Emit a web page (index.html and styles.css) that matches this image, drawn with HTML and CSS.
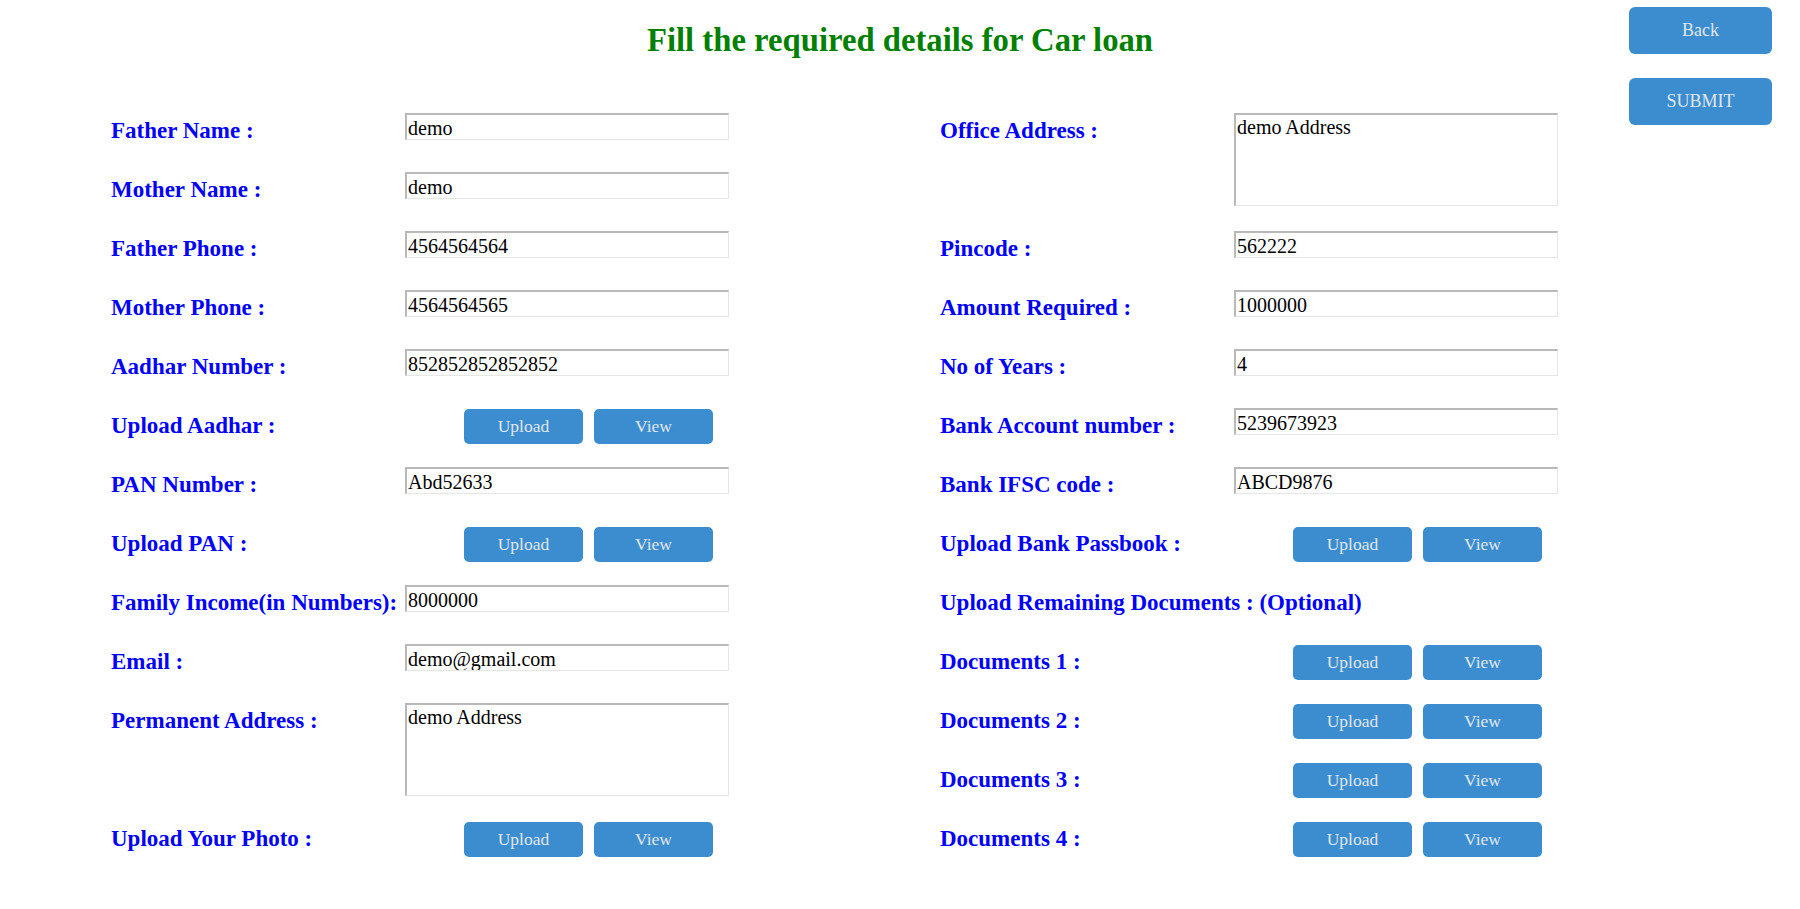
FILE: index.html
```html
<!DOCTYPE html>
<html lang="en">
<head>
<meta charset="utf-8">
<title>Car loan details</title>
<link rel="stylesheet" href="styles.css">
</head>
<body>
<div class="page">
  <h1 class="title">Fill the required details for Car loan</h1>
  <aside class="actions">
    <button class="btn btn-lg" type="button">Back</button>
    <button class="btn btn-lg" type="button">SUBMIT</button>
  </aside>
  <form class="form">
    <div class="col">
      <div class="row"><label class="lbl">Father Name :</label><input class="field" value="demo"></div>
      <div class="row"><label class="lbl">Mother Name :</label><input class="field" value="demo"></div>
      <div class="row"><label class="lbl">Father Phone :</label><input class="field" value="4564564564"></div>
      <div class="row"><label class="lbl">Mother Phone :</label><input class="field" value="4564564565"></div>
      <div class="row"><label class="lbl">Aadhar Number :</label><input class="field" value="852852852852852"></div>
      <div class="row"><label class="lbl">Upload Aadhar :</label><div class="btns"><button class="btn btn-sm" type="button">Upload</button><button class="btn btn-sm" type="button">View</button></div></div>
      <div class="row"><label class="lbl">PAN Number :</label><input class="field" value="Abd52633"></div>
      <div class="row"><label class="lbl">Upload PAN :</label><div class="btns"><button class="btn btn-sm" type="button">Upload</button><button class="btn btn-sm" type="button">View</button></div></div>
      <div class="row"><label class="lbl">Family Income(in Numbers):</label><input class="field" value="8000000"></div>
      <div class="row"><label class="lbl">Email :</label><input class="field" value="demo@gmail.com"></div>
      <div class="row tall"><label class="lbl">Permanent Address :</label><textarea class="area">demo Address</textarea></div>
      <div class="row"><label class="lbl">Upload Your Photo :</label><div class="btns"><button class="btn btn-sm" type="button">Upload</button><button class="btn btn-sm" type="button">View</button></div></div>
    </div>
    <div class="col">
      <div class="row tall"><label class="lbl">Office Address :</label><textarea class="area">demo Address</textarea></div>
      <div class="row"><label class="lbl">Pincode :</label><input class="field" value="562222"></div>
      <div class="row"><label class="lbl">Amount Required :</label><input class="field" value="1000000"></div>
      <div class="row"><label class="lbl">No of Years :</label><input class="field" value="4"></div>
      <div class="row"><label class="lbl">Bank Account number :</label><input class="field" value="5239673923"></div>
      <div class="row"><label class="lbl">Bank IFSC code :</label><input class="field" value="ABCD9876"></div>
      <div class="row"><label class="lbl">Upload Bank Passbook :</label><div class="btns"><button class="btn btn-sm" type="button">Upload</button><button class="btn btn-sm" type="button">View</button></div></div>
      <div class="row"><label class="lbl wide">Upload Remaining Documents : (Optional)</label></div>
      <div class="row"><label class="lbl">Documents 1 :</label><div class="btns"><button class="btn btn-sm" type="button">Upload</button><button class="btn btn-sm" type="button">View</button></div></div>
      <div class="row"><label class="lbl">Documents 2 :</label><div class="btns"><button class="btn btn-sm" type="button">Upload</button><button class="btn btn-sm" type="button">View</button></div></div>
      <div class="row"><label class="lbl">Documents 3 :</label><div class="btns"><button class="btn btn-sm" type="button">Upload</button><button class="btn btn-sm" type="button">View</button></div></div>
      <div class="row"><label class="lbl">Documents 4 :</label><div class="btns"><button class="btn btn-sm" type="button">Upload</button><button class="btn btn-sm" type="button">View</button></div></div>
    </div>
  </form>
</div>
</body>
</html>
```
FILE: styles.css
```css
html, body {
  margin: 0;
  padding: 0;
  background: #ffffff;
  font-family: "Liberation Serif", "Times New Roman", serif;
}

.page {
  display: grid;
  grid-template-columns: 1fr 171px;
  grid-template-rows: 113px auto;
  width: 1800px;
}

.title {
  grid-column: 1 / -1;
  grid-row: 1;
  margin: 0;
  padding-top: 22px;
  text-align: center;
  font-size: 32.7px;
  line-height: 37px;
  font-weight: bold;
  color: #008000;
}

.actions {
  grid-column: 2;
  grid-row: 1 / 3;
  align-self: start;
  display: flex;
  flex-direction: column;
  gap: 24px;
  padding-top: 7px;
  position: relative;
  z-index: 1;
}

.form {
  grid-column: 1;
  grid-row: 2;
  display: grid;
  grid-template-columns: 829px auto;
  padding-left: 111px;
}

.col {
  display: flex;
  flex-direction: column;
}

.row {
  display: flex;
  align-items: flex-start;
  height: 59px;
}

.row.tall {
  height: 118px;
}

.lbl {
  flex: none;
  width: 294px;
  padding-top: 4px;
  font-size: 23px;
  line-height: 27px;
  font-weight: bold;
  color: #0000ff;
}

.lbl.wide {
  width: auto;
  white-space: nowrap;
}

.field,
.area {
  box-sizing: border-box;
  width: 324px;
  margin: 0;
  padding: 0 1px;
  border-style: solid;
  border-width: 2px 1px 1px 2px;
  border-color: #b9b9b9 #e6e6e6 #e6e6e6 #b9b9b9;
  background: #ffffff;
  font-family: "Liberation Serif", "Times New Roman", serif;
  font-size: 20px;
  color: #000000;
  outline: none;
}

.field {
  height: 27px;
  padding-top: 2px;
}

.area {
  height: 93px;
  padding-top: 1px;
  resize: none;
  overflow: hidden;
  line-height: 23px;
}

.btns {
  display: flex;
  gap: 11px;
  margin-left: 59px;
  margin-top: 1px;
}

.btn {
  box-sizing: border-box;
  border: none;
  padding: 0;
  background: #3c8dd0;
  color: #e0e7ee;
  font-family: "Liberation Serif", "Times New Roman", serif;
  cursor: pointer;
}

.btn-sm {
  width: 119px;
  height: 35px;
  border-radius: 5px;
  font-size: 17.5px;
}

.btn-lg {
  width: 143px;
  height: 47px;
  border-radius: 6px;
  font-size: 18px;
}
```
